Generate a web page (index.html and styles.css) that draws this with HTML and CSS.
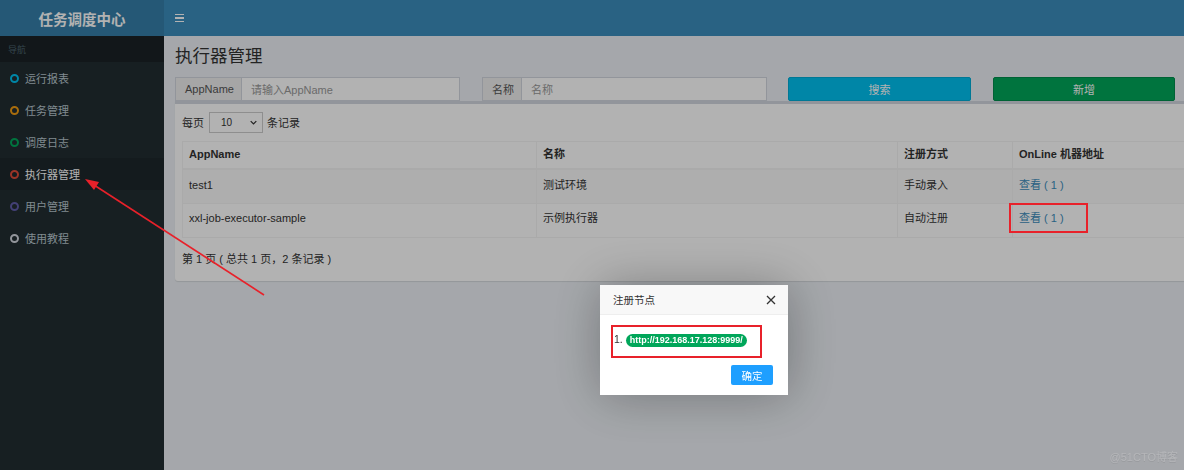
FILE: index.html
```html
<!DOCTYPE html>
<html lang="zh">
<head>
<meta charset="utf-8">
<title>执行器管理</title>
<link rel="stylesheet" href="styles.css">
</head>
<body>
<div class="app">
  <header class="topbar">
    <div class="logo">任务调度中心</div>
    <div class="navbar"><span class="burger"><i></i><i></i><i></i></span></div>
  </header>
  <div class="main">
    <aside class="sidebar">
      <div class="nav-header">导航</div>
      <ul class="menu">
        <li><span class="ring aqua"></span>运行报表</li>
        <li><span class="ring orange"></span>任务管理</li>
        <li><span class="ring green"></span>调度日志</li>
        <li class="active"><span class="ring red"></span>执行器管理</li>
        <li><span class="ring purple"></span>用户管理</li>
        <li><span class="ring gray"></span>使用教程</li>
      </ul>
    </aside>
    <section class="content">
      <h1 class="page-title">执行器管理</h1>
      <div class="filters">
        <div class="igroup w285"><span class="addon">AppName</span><span class="input ph">请输入AppName</span></div>
        <div class="igroup w285"><span class="addon">名称</span><span class="input ph">名称</span></div>
        <div class="btn btn-info w183">搜索</div>
        <div class="btn btn-success w182">新增</div>
      </div>
      <div class="box">
        <div class="length">每页 <span class="select">10<svg viewBox="0 0 10 6" class="chev"><path d="M1 1l4 4 4-4" fill="none" stroke="#333" stroke-width="1.8"/></svg></span> 条记录</div>
        <table class="grid">
          <colgroup><col class="c1"><col class="c2"><col class="c3"><col class="c4"></colgroup>
          <thead>
            <tr><th>AppName</th><th>名称</th><th>注册方式</th><th>OnLine 机器地址</th></tr>
          </thead>
          <tbody>
            <tr class="odd"><td>test1</td><td>测试环境</td><td>手动录入</td><td><a class="link">查看</a> <span class="cnt">( 1 )</span></td></tr>
            <tr><td>xxl-job-executor-sample</td><td>示例执行器</td><td>自动注册</td><td><a class="link">查看</a> <span class="cnt">( 1 )</span></td></tr>
          </tbody>
        </table>
        <div class="pageinfo">第 1 页 ( 总共 1 页，2 条记录 )</div>
      </div>
    </section>
  </div>
</div>

<div class="shade"></div>

<div class="layer">
  <div class="layer-title">注册节点<span class="close"><svg viewBox="0 0 10 10"><path d="M1 1l8 8M9 1l-8 8" stroke="#333" stroke-width="1.3"/></svg></span></div>
  <div class="layer-body">1. <span class="badge">http://192.168.17.128:9999/</span></div>
  <div class="layer-foot"><span class="lbtn">确定</span></div>
</div>

<div class="mark box1"></div>
<div class="mark box2"></div>
<svg class="arrow" width="1184" height="470" viewBox="0 0 1184 470">
  <line x1="264" y1="295" x2="94" y2="185" stroke="#e8212a" stroke-width="1.6"/>
  <polygon points="85,179 99,182 94,190" fill="#e8212a"/>
</svg>
<div class="watermark">@51CTO博客</div>
</body>
</html>
```

FILE: styles.css
```css
* { box-sizing: border-box; }
html, body { margin: 0; padding: 0; }
body {
  width: 1184px;
  height: 470px;
  overflow: hidden;
  font-family: "Liberation Sans", "Noto Sans CJK SC", sans-serif;
  font-size: 11px;
  color: #333;
  background: #ecf0f5;
}
.app { display: flex; flex-direction: column; height: 470px; }
.topbar { display: flex; height: 36px; flex: none; }
.logo {
  width: 164px;
  background: #367fa9;
  color: #fff;
  font-weight: bold;
  font-size: 14.5px;
  display: flex; align-items: center; justify-content: center;
}
.navbar { flex: 1; background: #3c8dbc; display: flex; align-items: center; padding-left: 11px; }
.burger { display: flex; flex-direction: column; gap: 2px; width: 9px; }
.burger i { display: block; height: 1.6px; background: #fff; }

.main { display: flex; flex: 1; min-height: 0; }
.sidebar { width: 164px; flex: none; background: #222d32; }
.nav-header {
  height: 26px;
  background: #1a2226;
  color: #4b646f;
  font-size: 9px;
  padding-left: 8px;
  display: flex; align-items: center;
}
.menu { list-style: none; margin: 0; padding: 0; }
.menu li {
  height: 32px;
  display: flex; align-items: center;
  padding-left: 10px;
  color: #b8c7ce;
  font-size: 11px;
}
.menu li.active { background: #1e282c; color: #fff; }
.ring {
  width: 9px; height: 9px;
  border: 2px solid;
  border-radius: 50%;
  margin-right: 6px;
}
.ring.aqua { border-color: #00c0ef; }
.ring.orange { border-color: #f39c12; }
.ring.green { border-color: #00a65a; }
.ring.red { border-color: #dd4b39; }
.ring.purple { border-color: #605ca8; }
.ring.gray { border-color: #d2d6de; }

.content { flex: 1; padding: 0 0 0 11px; overflow: hidden; }
.page-title {
  margin: 0;
  padding-top: 8px;
  height: 41px;
  font-size: 17.5px;
  font-weight: normal;
  color: #333;
  line-height: 24px;
}
.filters { display: flex; height: 24px; }
.igroup { display: flex; height: 24px; border: 1px solid #d2d6de; background: #fff; }
.w285 { width: 285px; }
.w183 { width: 183px; }
.w182 { width: 182px; }
.filters > * + * { margin-left: 22px; }
.filters > .btn.w183 { margin-left: 21px; }
.addon {
  background: #eee;
  border-right: 1px solid #d2d6de;
  display: flex; align-items: center;
  padding: 0 7px 0 9px;
  color: #555;
}
.input { flex: 1; display: flex; align-items: center; padding-left: 9px; }
.ph { color: #999; }
.btn {
  height: 24px;
  border-radius: 2px;
  color: #fff;
  display: flex; align-items: center; justify-content: center;
}
.btn-info { background: #00c0ef; border: 1px solid #00acd6; }
.btn-success { background: #00a65a; border: 1px solid #008d4c; }

.box {
  margin-right: -30px;
  height: 180px;
  background: #fff;
  border-top: 3px solid #d2d6de;
  border-radius: 0 0 3px 3px;
  box-shadow: 0 1px 1px rgba(0,0,0,0.1);
  padding: 7px 7px 0 7px;
}
.length { display: flex; align-items: center; height: 22px; color: #333; }
.select {
  display: inline-flex; align-items: center; justify-content: space-between;
  width: 54px; height: 21px;
  border: 1px solid #ccc;
  margin: 0 4px 0 5px;
  padding: 0 5px 0 11px;
  font-size: 10px;
}
.chev { width: 7px; height: 5px; }
.grid {
  margin-top: 8px;
  border-collapse: collapse;
  table-layout: fixed;
  width: 1040px;
  border: 1px solid #f4f4f4;
}
.c1 { width: 354px; }
.c2 { width: 361px; }
.c3 { width: 115px; }
.c4 { width: 210px; }
.grid th, .grid td {
  border: 1px solid #f4f4f4;
  text-align: left;
  padding: 0 6px;
  color: #333;
  line-height: 13px;
}
.grid th { height: 27px; font-weight: bold; border-bottom-width: 2px; }
.grid td { height: 35px; vertical-align: top; padding-top: 9px; }
.grid tbody tr + tr td { height: 34px; padding-top: 8px; }
.grid tr.odd td { background: #f9f9f9; }
.link { color: #3c8dbc; }
.cnt { color: #3c8dbc; }
.pageinfo { padding-top: 12px; color: #333; }

.shade { position: fixed; inset: 0; background: rgba(0,0,0,0.3); z-index: 10; }

.layer {
  position: fixed;
  left: 600px; top: 285px;
  width: 188px; height: 110px;
  background: #fff;
  z-index: 20;
  box-shadow: 1px 1px 50px rgba(0,0,0,0.3);
}
.layer-title {
  height: 30px;
  background: #f8f8f8;
  border-bottom: 1px solid #eee;
  display: flex; align-items: center; justify-content: space-between;
  padding: 0 12px 0 13px;
  color: #333;
  font-size: 10.5px;
}
.close svg { width: 10px; height: 10px; display: block; }
.layer-body { padding: 18px 0 0 14px; height: 46px; display: flex; align-items: flex-start; font-size: 10.5px; color: #333; }
.badge {
  margin-left: 3px;
  margin-top: 1px;
  background: #00a65a;
  color: #fff;
  font-weight: bold;
  font-size: 9px;
  padding: 1px 4px;
  border-radius: 7px;
  line-height: 11px;
}
.layer-foot { display: flex; justify-content: flex-end; padding-right: 15px; padding-top: 4px; }
.lbtn {
  width: 42px; height: 20px;
  background: #1e9fff;
  border-radius: 2px;
  color: #fff;
  display: flex; align-items: center; justify-content: center;
  font-size: 10.5px;
}

.mark { position: fixed; border: 2px solid #e8212a; z-index: 30; }
.box1 { left: 1009px; top: 203px; width: 79px; height: 30px; }
.box2 { left: 611px; top: 325px; width: 151px; height: 33px; }
.arrow { position: fixed; left: 0; top: 0; z-index: 30; pointer-events: none; }
.watermark {
  position: fixed; right: 6px; bottom: 6px;
  z-index: 30;
  color: #b5b6b9;
  font-size: 11px;
  text-shadow: 0 1px 0 rgba(0,0,0,0.08);
}
```
